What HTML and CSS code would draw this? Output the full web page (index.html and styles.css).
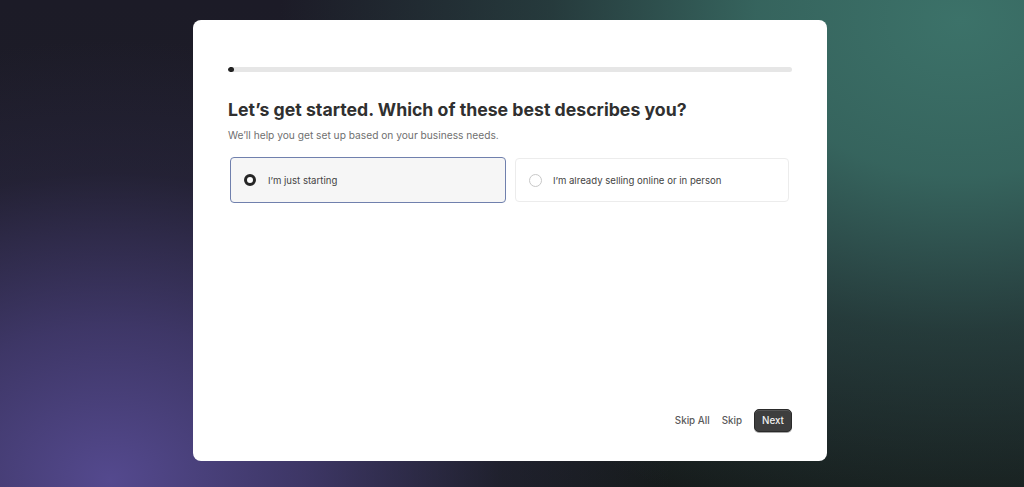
FILE: index.html
```html
<!DOCTYPE html>
<html lang="en">
<head>
<meta charset="utf-8">
<title>Let's get started</title>
<link rel="stylesheet" href="styles.css">
</head>
<body>
<div class="stage">
  <main class="card">
    <div class="progress"><div class="progress-fill"></div></div>
    <h1 class="title">Let’s get started. Which of these best describes you?</h1>
    <p class="subtitle">We’ll help you get set up based on your business needs.</p>
    <div class="options">
      <label class="option option-selected">
        <span class="radio radio-on"></span>
        <span class="option-text">I’m just starting</span>
      </label>
      <label class="option">
        <span class="radio"></span>
        <span class="option-text">I’m already selling online or in person</span>
      </label>
    </div>
    <div class="footer">
      <button class="link-btn">Skip All</button>
      <button class="link-btn">Skip</button>
      <button class="primary-btn">Next</button>
    </div>
  </main>
</div>
</body>
</html>
```
FILE: styles.css
```css
* { box-sizing: border-box; }
html, body { margin: 0; padding: 0; }
body {
  width: 1024px;
  height: 487px;
  overflow: hidden;
  font-family: Inter, "Noto Sans", sans-serif;
  background:
    radial-gradient(ellipse 560px 440px at 110px 480px, rgba(84,73,142,1) 0%, rgba(72,62,122,0.78) 35%, rgba(50,44,82,0.32) 70%, rgba(40,36,60,0) 100%),
    radial-gradient(ellipse 680px 520px at 960px 20px, rgba(60,114,105,1) 0%, rgba(56,106,98,0.92) 30%, rgba(46,84,78,0.55) 60%, rgba(30,50,48,0) 100%),
    linear-gradient(to bottom, #1c1b27 0%, #1d1d27 50%, #161b1b 100%);
}
.stage {
  display: flex;
  justify-content: center;
  padding-top: 20px;
  padding-right: 4px;
}
.card {
  width: 634px;
  height: 441px;
  background: #ffffff;
  border-radius: 8px;
  padding: 47px 35px 29px 35px;
  display: flex;
  flex-direction: column;
}
.progress {
  height: 5px;
  border-radius: 3px;
  background: #e6e6e6;
  overflow: hidden;
}
.progress-fill {
  width: 6px;
  height: 100%;
  background: #222222;
  border-radius: 3px;
}
.title {
  margin: 25px 0 0 0;
  font-size: 17.7px;
  line-height: 26px;
  font-weight: 700;
  color: #303030;
}
.subtitle {
  margin: 4px 0 0 0;
  font-size: 10.2px;
  line-height: 16px;
  color: #6f6f6f;
}
.options {
  margin-top: 14px;
  display: grid;
  grid-template-columns: 276px 274px;
  column-gap: 9px;
  padding-left: 2px;
  align-items: center;
}
.option {
  height: 44px;
  border: 1px solid #ececec;
  border-radius: 4px;
  display: flex;
  align-items: center;
  padding-left: 12px;
  gap: 11px;
  background: #fff;
}
.option-selected {
  height: 46px;
  border: 1.5px solid #7080ad;
  background: #f6f6f6;
  padding-left: 13px;
}
.radio {
  width: 13px;
  height: 13px;
  border-radius: 50%;
  border: 1px solid #c8c8c8;
  background: #fff;
  flex: none;
  margin-left: 1px;
}
.radio-on {
  width: 12px;
  height: 12px;
  border: 3.5px solid #262626;
  margin-left: 0;
  margin-right: 1px;
}
.option-text {
  font-size: 9.6px;
  color: #444;
}
.footer {
  margin-top: auto;
  display: flex;
  justify-content: flex-end;
  align-items: center;
  gap: 12px;
}
.link-btn {
  border: 0;
  background: none;
  padding: 0;
  font-family: inherit;
  font-size: 9.8px;
  font-weight: 500;
  color: #5a5a5a;
}
.primary-btn {
  width: 38px;
  height: 23px;
  border: 1px solid #2a2a2a;
  border-radius: 5px;
  background: #3e3e3e;
  color: #f0f0f0;
  font-family: inherit;
  font-size: 9.8px;
  font-weight: 500;
  padding: 0;
  box-shadow: 0 1px 0 rgba(0,0,0,0.35), inset 0 1px 0 rgba(255,255,255,0.12);
}
```
